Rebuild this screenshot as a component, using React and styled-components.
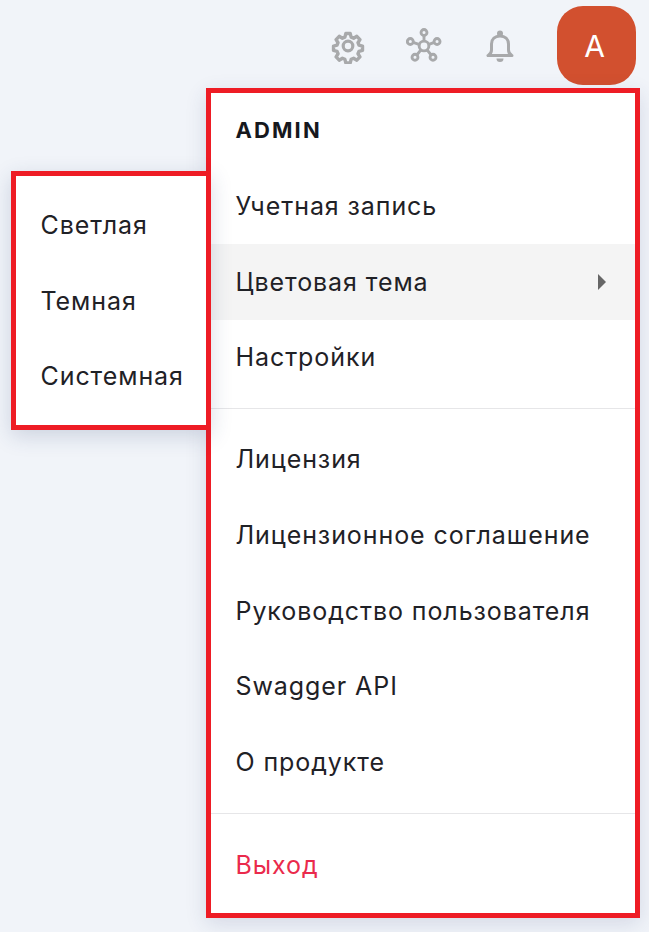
import React from "react";
import styled, { createGlobalStyle } from "styled-components";

const Global = createGlobalStyle`
  html, body { margin: 0; padding: 0; background: #f1f4f9; }
  body { font-family: Inter, "Noto Sans", sans-serif; width: 649px; height: 932px; overflow: hidden; }
`;
const Page = styled.div`
  position: relative;
  width: 649px;
  height: 932px;
  background: #f1f4f9;
`;
const TopBar = styled.header`
  display: flex;
  justify-content: flex-end;
  align-items: center;
  height: 79px;
  padding: 6px 13px 0 0;
`;
const IconButton = styled.div`
  width: 36px;
  height: 40px;
  margin-right: ${p => p.$gap}px;
  color: #a8a9ab;
  display: flex;
  align-items: center;
  justify-content: center;
`;
const Avatar = styled.div`
  width: 79px;
  height: 79px;
  box-sizing: border-box;
  padding-right: 4px;
  border-radius: 26px;
  background: #d2502f;
  color: #fff;
  font-size: 30px;
  display: flex;
  align-items: center;
  justify-content: center;
`;
const Menu = styled.nav`
  position: absolute;
  left: 206px;
  top: 88px;
  width: 434px;
  height: 830px;
  box-sizing: border-box;
  border: 5px solid #ee1c25;
  background: #fff;
  box-shadow: 0 6px 20px rgba(40, 60, 110, 0.14);
  display: flex;
  flex-direction: column;
`;
const SubMenu = styled.nav`
  position: absolute;
  left: 11px;
  top: 171px;
  width: 200px;
  height: 259px;
  box-sizing: border-box;
  border: 5px solid #ee1c25;
  background: #fff;
  box-shadow: 0 6px 20px rgba(40, 60, 110, 0.18);
  display: flex;
  flex-direction: column;
  padding: 11.600px 0 0;
`;
const Row = styled.div`
  height: 75.7px;
  flex: none;
  box-sizing: border-box;
  display: flex;
  align-items: center;
  justify-content: space-between;
  padding: ${p => (p.$danger ? 2 : 0)}px 29px ${p => (p.$danger ? 0 : 1)}px 24.500px;
  font-size: 25px;
  letter-spacing: 0.92px;
  color: ${p => (p.$danger ? "#ea2a4c" : "#1f2126")};
  font-weight: ${p => (p.$bold ? 700 : 400)};
  background: ${p => (p.$active ? "#f4f4f4" : "transparent")};
`;
const Title = styled(Row)`
  font-size: 22px;
  letter-spacing: 2.1px;
  color: #16181d;
`;
const Divider = styled.hr`
  flex: none;
  margin: 12.6px 0;
  border: 0;
  height: 1px;
  background: #e6e6e8;
`;
const Arrow = styled.span`
  width: 0;
  height: 0;
  border-left: 8px solid #666;
  border-top: 8px solid transparent;
  border-bottom: 8px solid transparent;
`;

const Gear = () => (
  <svg width="36" height="36" viewBox="0 0 36 36" fill="none" stroke="currentColor" strokeWidth="3.800" strokeLinejoin="round">
    <path d="M15.500 4h5l1 4 2.800 1.200 3.600-2.100 3.500 3.700-2.200 3.500 1.100 2.700 4 1v5l-4 1-1.100 2.700 2.200 3.500-3.500 3.700-3.600-2.100-2.800 1.200-1 4h-5l-1-4-2.800-1.200-3.600 2.100-3.500-3.700 2.200-3.500-1.100-2.700-4-1v-5l4-1 1.100-2.700-2.200-3.500 3.500-3.700 3.600 2.100 2.800-1.200z" transform="translate(2 2) scale(.89)" />
    <circle cx="18" cy="18" r="4.800" strokeWidth="3.200" />
  </svg>
);
const Network = () => (
  <svg width="40" height="40" viewBox="0 0 40 40" fill="none" stroke="currentColor" strokeWidth="3.200">
    <circle cx="20" cy="20" r="5.400" />
    <circle cx="20" cy="5" r="3.300" />
    <circle cx="4.800" cy="15" r="3.300" />
    <circle cx="34.500" cy="15" r="3.300" />
    <circle cx="10" cy="32.500" r="3.300" />
    <circle cx="30" cy="32.500" r="3.300" />
    <path d="M20 8V15M7.800 16l7.500 2.400M31.500 16l-6.800 2.400M12 30l4.800-6M28 30l-4.800-6" />
  </svg>
);
const Bell = () => (
  <svg width="36" height="36" viewBox="0 0 36 36" fill="none" stroke="currentColor" strokeWidth="3" strokeLinejoin="round">
    <path d="M6 27.500h24c-2.500-1.200-3.500-3-3.500-5.500v-6C26.500 11 23 8 18 8s-8.500 3-8.500 8v6c0 2.500-1 4.300-3.500 5.500z" />
    <circle cx="18" cy="5.500" r="3" fill="currentColor" stroke="none" />
    <path d="M14.500 30.500h7a3.500 3.500 0 0 1-7 0z" fill="currentColor" stroke="none" />
  </svg>
);

export default function App() {
  return (
    <Page>
      <Global />
      <TopBar>
        <IconButton $gap={40}><Gear /></IconButton>
        <IconButton $gap={40}><Network /></IconButton>
        <IconButton $gap={39}><Bell /></IconButton>
        <Avatar>A</Avatar>
      </TopBar>
      <Menu>
        <Title $bold>ADMIN</Title>
        <Row>Учетная запись</Row>
        <Row $active>Цветовая тема<Arrow /></Row>
        <Row>Настройки</Row>
        <Divider />
        <Row>Лицензия</Row>
        <Row>Лицензионное соглашение</Row>
        <Row>Руководство пользователя</Row>
        <Row>Swagger API</Row>
        <Row>О продукте</Row>
        <Divider />
        <Row $danger>Выход</Row>
      </Menu>
      <SubMenu>
        <Row>Светлая</Row>
        <Row>Темная</Row>
        <Row>Системная</Row>
      </SubMenu>
    </Page>
  );
}
